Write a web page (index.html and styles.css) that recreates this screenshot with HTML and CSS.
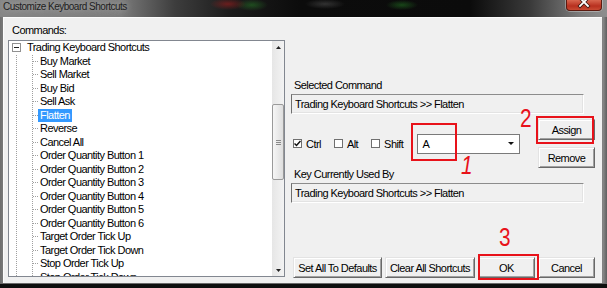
FILE: index.html
```html
<!DOCTYPE html>
<html lang="en">
<head>
  <meta charset="UTF-8" />
  <title>Customize Keyboard Shortcuts</title>
  <link rel="stylesheet" href="styles.css">
</head>
<body>
  <div class="window">
    <div class="titlebar">
      <span class="title">Customize Keyboard Shortcuts</span>
      <div class="close-btn">
        <svg width="36" height="11" viewBox="0 0 36 11">
          <path d="M14 -2 L22 6 M22 -2 L14 6" stroke="#3a1a14" stroke-width="3.4" stroke-linecap="square" />
          <path d="M14 -2 L22 6 M22 -2 L14 6" stroke="#fff" stroke-width="1.8" stroke-linecap="square" />
        </svg>
      </div>
    </div>

    <div class="frame">
      <div class="client">
        <!-- lista de comandos -->
        <div class="commands">
          <div class="label">Commands:</div>
          <div class="tree">
            <div class="tree-list">
              <div class="row root-row">
                <span class="expander"><span class="minus"></span></span>
                <span class="txt">Trading Keyboard Shortcuts</span>
              </div>
              <div class="children">
                <div class="child-list">
                  <div class="row"><span class="dash"></span><span class="txt">Buy Market</span></div>
                  <div class="row"><span class="dash"></span><span class="txt">Sell Market</span></div>
                  <div class="row"><span class="dash"></span><span class="txt">Buy Bid</span></div>
                  <div class="row"><span class="dash"></span><span class="txt">Sell Ask</span></div>
                  <div class="row"><span class="dash"></span><span class="txt sel">Flatten</span></div>
                  <div class="row"><span class="dash"></span><span class="txt">Reverse</span></div>
                  <div class="row"><span class="dash"></span><span class="txt">Cancel All</span></div>
                  <div class="row"><span class="dash"></span><span class="txt">Order Quantity Button 1</span></div>
                  <div class="row"><span class="dash"></span><span class="txt">Order Quantity Button 2</span></div>
                  <div class="row"><span class="dash"></span><span class="txt">Order Quantity Button 3</span></div>
                  <div class="row"><span class="dash"></span><span class="txt">Order Quantity Button 4</span></div>
                  <div class="row"><span class="dash"></span><span class="txt">Order Quantity Button 5</span></div>
                  <div class="row"><span class="dash"></span><span class="txt">Order Quantity Button 6</span></div>
                  <div class="row"><span class="dash"></span><span class="txt">Target Order Tick Up</span></div>
                  <div class="row"><span class="dash"></span><span class="txt">Target Order Tick Down</span></div>
                  <div class="row"><span class="dash"></span><span class="txt">Stop Order Tick Up</span></div>
                  <div class="row"><span class="dash"></span><span class="txt">Stop Order Tick Down</span></div>
                </div>
              </div>
            </div>
            <div class="scrollbar">
              <div class="sb-arrow"><svg width="5" height="3"><path d="M0 3H5L2.5 0Z" fill="#222" /></svg></div>
              <div class="sb-track">
                <div class="sb-thumb"><span class="grip"></span></div>
              </div>
              <div class="sb-arrow"><svg width="5" height="3"><path d="M0 0H5L2.5 3Z" fill="#222" /></svg></div>
            </div>
          </div>
        </div>

        <!-- detalle del comando -->
        <div class="details">
          <div class="label">Selected Command</div>
          <div class="readonly">Trading Keyboard Shortcuts &gt;&gt; Flatten</div>

          <div class="assign-area">
            <div class="keys">
              <div class="check">
                <span class="box checked">
                  <svg width="7" height="7" viewBox="0 0 7 7"><path d="M0.5 3.5L2.5 5.5L6.5 1" stroke="#111" stroke-width="1.5" fill="none" /></svg>
                </span>
                <span>Ctrl</span>
              </div>
              <div class="check"><span class="box"></span><span>Alt</span></div>
              <div class="check"><span class="box"></span><span>Shift</span></div>
              <div class="combo">
                <span class="combo-value">A</span>
                <span class="combo-arrow"><svg width="6" height="3"><path d="M0 0H6L3 3Z" fill="#111" /></svg></span>
              </div>
            </div>
            <div class="side-buttons">
              <button class="btn">Assign</button>
              <button class="btn">Remove</button>
            </div>
          </div>

          <div class="label">Key Currently Used By</div>
          <div class="readonly">Trading Keyboard Shortcuts &gt;&gt; Flatten</div>

          <div class="footer">
            <button class="btn btn-wide">Set All To Defaults</button>
            <button class="btn btn-wider">Clear All Shortcuts</button>
            <button class="btn">OK</button>
            <button class="btn">Cancel</button>
          </div>
        </div>
      </div>
    </div>
    <div class="bottom-edge"></div>
  </div>

  <!-- anotaciones en rojo -->
  <div class="mark mark-key"></div>
  <div class="mark mark-assign"></div>
  <div class="mark mark-ok"></div>
  <span class="num num-1">1</span>
  <span class="num num-2">2</span>
  <span class="num num-3">3</span>
</body>
</html>
```

FILE: styles.css
```css
body {
  margin: 0;
  width: 607px;
  height: 288px;
  overflow: hidden;
  position: relative;
  background: #0d0d0d;
  font-family: "Liberation Sans", Arial, sans-serif;
  font-size: 11px;
  letter-spacing: -0.55px;
  color: #000;
}
.window {
  display: flex;
  flex-direction: column;
  height: 288px;
}
.titlebar {
  height: 17px;
  display: flex;
  align-items: flex-start;
  background:
    radial-gradient(ellipse 18px 6px at 228px 4px, rgba(170, 30, 30, 0.55), transparent),
    radial-gradient(ellipse 16px 6px at 252px 5px, rgba(40, 140, 40, 0.45), transparent),
    radial-gradient(ellipse 20px 5px at 325px 4px, rgba(120, 120, 120, 0.35), transparent),
    radial-gradient(ellipse 16px 5px at 402px 5px, rgba(40, 140, 40, 0.45), transparent),
    linear-gradient(90deg, #868686 0, #7c7c7c 120px, #3d3d3d 175px, #1c1c1c 230px, #0c0c0c 300px, #0b0b0b 470px, #3a3a3a 530px, #7c7c7c 580px, #8e8e8e 607px);
}
.title {
  padding-left: 3px;
  font-size: 10px;
  line-height: 13px;
  letter-spacing: -0.5px;
  color: #1e1e1e;
  text-shadow: 0 0 6px #b8b8b8;
}
.close-btn {
  margin-left: auto;
  margin-right: 5px;
  width: 36px;
  height: 11px;
  box-sizing: border-box;
  border: 1px solid #5c1a10;
  border-top: none;
  border-radius: 0 0 4px 4px;
  background: linear-gradient(#d8664f, #b8301f 60%, #c84a33);
  box-shadow: 0 0 0 1px rgba(255, 255, 255, 0.3);
  overflow: hidden;
}
.close-btn svg {
  display: block;
  margin: 0 -1px;
}
.frame {
  display: flex;
  height: 266px;
  padding: 0 5px 0 3px;
  background: linear-gradient(90deg, #6e6e6e 0, #7a7a7a 3px, #7a7a7a 602px, #8a8a8a 603px, #5e5e5e 607px);
}
.bottom-edge {
  height: 4px;
  border-top: 1px solid #6a6a6a;
  background: #0e0f0e;
}
.client {
  flex: 1;
  display: flex;
  background: #f0f0f0;
  box-shadow: inset 1px 1px #fcfcfc;
}
.label {
  height: 13px;
  line-height: 13px;
  padding-left: 3px;
}

/* arbol de comandos */
.commands {
  width: 277px;
  margin-left: 5px;
  padding-top: 7px;
  display: flex;
  flex-direction: column;
}
.commands .label {
  padding-left: 4px;
}
.tree {
  margin-top: 3px;
  height: 237px;
  box-sizing: border-box;
  border: 1px solid #828790;
  background: #fff;
  display: flex;
  overflow: hidden;
}
.tree-list {
  flex: 1;
  overflow: hidden;
}
.row {
  display: flex;
  align-items: center;
  height: 13.5px;
  white-space: nowrap;
}
.root-row {
  padding-left: 3px;
}
.expander {
  width: 9px;
  height: 9px;
  box-sizing: border-box;
  border: 1px solid #919191;
  margin-right: 4px;
  display: flex;
  align-items: center;
  justify-content: center;
  background: #fff;
}
.minus {
  width: 5px;
  height: 1px;
  background: #222;
}
.children {
  margin-left: 7px;
  padding-left: 15px;
  border-left: 1px dotted #a0a0a0;
}
.child-list {
  border-left: 1px dotted #a0a0a0;
}
.dash {
  width: 5px;
  border-top: 1px dotted #a0a0a0;
}
.txt {
  padding: 0 2px;
  line-height: 13px;
}
.txt.sel {
  background: #3399ff;
  color: #fff;
}
.scrollbar {
  width: 12px;
  display: flex;
  flex-direction: column;
  background: linear-gradient(90deg, #e6e6e6, #f3f3f3);
}
.sb-arrow {
  height: 12px;
  display: flex;
  align-items: center;
  justify-content: center;
}
.sb-arrow svg {
  display: block;
}
.sb-track {
  flex: 1;
}
.sb-thumb {
  margin-top: 51px;
  height: 76px;
  box-sizing: border-box;
  border: 1px solid #9a9a9a;
  border-radius: 2px;
  background: linear-gradient(90deg, #f6f6f6, #dedede);
  display: flex;
  align-items: center;
  justify-content: center;
}
.grip {
  width: 5px;
  height: 5px;
  background: repeating-linear-gradient(#8a8a8a 0 1px, transparent 1px 2px);
}

/* panel derecho */
.details {
  width: 304px;
  margin-left: 6px;
  padding-top: 62px;
  padding-bottom: 5px;
  display: flex;
  flex-direction: column;
}
.readonly {
  width: 293px;
  height: 20px;
  box-sizing: border-box;
  margin-top: 2px;
  padding-left: 3px;
  line-height: 18px;
  border: 1px solid;
  border-color: #8c8c8c #fff #fff #6f6f6f;
  box-shadow: inset -1px -1px #e3e3e3;
  background: #f0f0f0;
}
.assign-area {
  display: flex;
  margin-top: 5px;
}
.keys {
  flex: 1;
  display: flex;
  align-items: center;
  padding-left: 2px;
}
.check {
  display: flex;
  align-items: center;
  gap: 4px;
  margin-right: 13px;
}
.box {
  width: 9px;
  height: 9px;
  box-sizing: border-box;
  border: 1px solid #6f6f6f;
  background: #fff;
  display: flex;
  align-items: center;
  justify-content: center;
}
.box svg {
  display: block;
}
.combo {
  width: 103px;
  height: 20px;
  margin-left: 1px;
  box-sizing: border-box;
  border: 1px solid #7a7a7a;
  background: #fff;
  display: flex;
  align-items: center;
}
.combo-value {
  flex: 1;
  padding-left: 4px;
}
.combo-arrow {
  width: 14px;
  height: 16px;
  margin-right: 1px;
  display: flex;
  align-items: center;
  justify-content: center;
}
.combo-arrow svg {
  display: block;
}
.side-buttons {
  display: flex;
  flex-direction: column;
  gap: 7px;
}
.btn {
  width: 57px;
  height: 21px;
  box-sizing: border-box;
  padding: 0;
  font: inherit;
  letter-spacing: inherit;
  color: #000;
  background: #f0f0f0;
  border: 1px solid;
  border-color: #e3e3e3 #696969 #696969 #e3e3e3;
  box-shadow: inset 1px 1px #fff, inset -1px -1px #a0a0a0;
}
.btn-wide {
  width: 89px;
}
.btn-wider {
  width: 90px;
}
.footer {
  margin-top: auto;
  padding-left: 2px;
  display: flex;
  gap: 3px;
}

/* anotaciones */
.mark {
  position: absolute;
  box-sizing: border-box;
  border: 2px solid #e8121a;
}
.mark-key {
  left: 411px;
  top: 123px;
  width: 46px;
  height: 38px;
}
.mark-assign {
  left: 536px;
  top: 116px;
  width: 58px;
  height: 28px;
}
.mark-ok {
  left: 478px;
  top: 254px;
  width: 61px;
  height: 26px;
}
.num {
  position: absolute;
  font-size: 26px;
  line-height: 26px;
  letter-spacing: 0;
  color: #e8121a;
  transform: scaleX(0.8);
  transform-origin: left top;
}
.num-1 {
  left: 461px;
  top: 152px;
  font-style: italic;
}
.num-2 {
  left: 520px;
  top: 105px;
}
.num-3 {
  left: 499px;
  top: 224px;
}
```
